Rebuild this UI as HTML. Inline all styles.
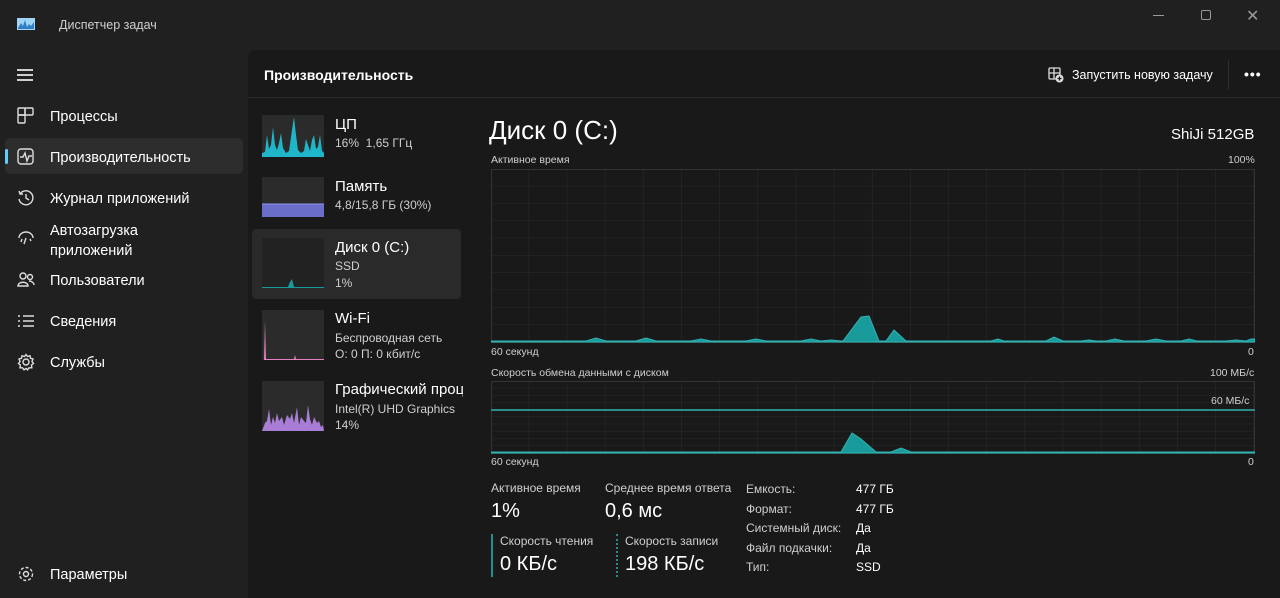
<!DOCTYPE html>
<html><head><meta charset="utf-8"><style>
*{margin:0;padding:0;box-sizing:border-box}
body{width:1280px;height:598px;background:#202020;font-family:"Liberation Sans","Noto Sans CJK SC",sans-serif;color:#fff;position:relative;overflow:hidden}
.a{position:absolute;white-space:nowrap}
.nav{font-size:14.5px;color:#fff}
.sm{font-size:12px;color:#cfcfcf}
.xs{font-size:10.5px;color:#cfcfcf}
</style></head><body>
<svg class="a" style="left:17px;top:17px" width="18" height="14"><rect x="0" y="1" width="18" height="12" fill="#9fd4f5"/><path d="M1 11 L4 6 L6 9 L8 3 L10 10 L12 7 L14 9 L17 5 L17 12 L1 12Z" fill="#2f7fc6"/></svg>
<div class="a" style="left:59px;top:18px;font-size:12.5px;color:#cfcfcf">Диспетчер задач</div>
<div class="a" style="left:1153px;top:15px;width:11px;height:1px;background:#9a9a9a"></div>
<div class="a" style="left:1201px;top:10px;width:10px;height:10px;border:1px solid #9a9a9a;border-radius:2px"></div>
<div class="a" style="left:1246px;top:6px;font-size:16px;color:#9a9a9a">✕</div>
<div class="a" style="left:17px;top:69px;width:16px;height:1.5px;background:#cfcfcf;box-shadow:0 5px 0 #cfcfcf,0 10px 0 #cfcfcf"></div>
<div class="a" style="left:5px;top:138px;width:238px;height:36px;background:#2d2d2d;border-radius:5px"></div>
<div class="a" style="left:5px;top:149px;width:3px;height:15px;background:#60cdff;border-radius:2px"></div>
<svg class="a" style="left:17px;top:107px" width="18" height="18" fill="none" stroke="#ddd" stroke-width="1.4"><rect x="1" y="1" width="7" height="7" rx="1"/><rect x="1" y="8" width="7" height="8" rx="1"/><rect x="8" y="1" width="8" height="7" rx="1"/></svg>
<div class="a nav" style="left:50px;top:109px">Процессы</div>
<svg class="a" style="left:17px;top:148px" width="18" height="18" fill="none" stroke="#ddd" stroke-width="1.4"><rect x="1" y="1" width="15" height="15" rx="3"/><path d="M3 9 L6 9 L8 5 L10 13 L12 8 L15 8"/></svg>
<div class="a nav" style="left:50px;top:150px">Производительность</div>
<svg class="a" style="left:17px;top:189px" width="18" height="18" fill="none" stroke="#ddd" stroke-width="1.4"><path d="M3 5 A7 7 0 1 1 2 10"/><path d="M2 2 L3 5 L6 5"/><path d="M9 5 L9 9 L12 11"/></svg>
<div class="a nav" style="left:50px;top:191px">Журнал приложений</div>
<svg class="a" style="left:17px;top:229px" width="18" height="18" fill="none" stroke="#ddd" stroke-width="1.4"><path d="M2 9 A7 6 0 0 1 16 9"/><path d="M9 9 L7 15"/><path d="M5 10 L4 13 M13 10 L14 12"/></svg>
<div class="a nav" style="left:50px;top:221px;line-height:20px">Автозагрузка<br>приложений</div>
<svg class="a" style="left:17px;top:271px" width="18" height="18" fill="none" stroke="#ddd" stroke-width="1.4"><circle cx="6" cy="5" r="3"/><circle cx="13" cy="6" r="2.5"/><path d="M1 15 C1 10 11 10 11 15 Z"/><path d="M12 10 C15 10 17 12 17 14"/></svg>
<div class="a nav" style="left:50px;top:273px">Пользователи</div>
<svg class="a" style="left:17px;top:312px" width="18" height="18" stroke="#ddd" stroke-width="1.4"><path d="M1 4H3M6 4H17M1 9H3M6 9H17M1 14H3M6 14H17"/></svg>
<div class="a nav" style="left:50px;top:314px">Сведения</div>
<svg class="a" style="left:17px;top:353px" width="18" height="18" fill="none" stroke="#ddd" stroke-width="1.4"><circle cx="9" cy="9" r="3"/><path d="M9 1.5 L10.5 3.5 L13 2.8 L13.5 5.3 L16 6 L15 8.5 L16.5 10.5 L14.5 12 L14.8 14.8 L12 14.8 L10.5 16.8 L9 15.5 L7 16.8 L5.5 14.8 L3 14.8 L3.3 12 L1.5 10.5 L3 8.5 L2 6 L4.5 5.3 L5 2.8 L7.5 3.5 Z"/></svg>
<div class="a nav" style="left:50px;top:355px">Службы</div>
<svg class="a" style="left:17px;top:565px" width="18" height="18" fill="none" stroke="#ddd" stroke-width="1.4"><circle cx="9" cy="9" r="2.5"/><circle cx="9" cy="9" r="6.5" stroke-dasharray="3 2"/></svg>
<div class="a nav" style="left:50px;top:567px">Параметры</div>
<div class="a" style="left:248px;top:50px;width:1032px;height:548px;background:#191919;border-top-left-radius:8px"></div>
<div class="a" style="left:248px;top:97px;width:1032px;height:1px;background:#2b2b2b"></div>
<div class="a" style="left:264px;top:67px;font-size:14px;font-weight:bold">Производительность</div>
<svg class="a" style="left:1048px;top:67px" width="16" height="16" fill="none" stroke="#ddd" stroke-width="1.3"><rect x="1" y="1" width="11" height="11" rx="1"/><path d="M1 6H12M6 1V12"/><circle cx="11.5" cy="11.5" r="4" fill="#ddd" stroke="none"/><path d="M11.5 9.5V13.5M9.5 11.5H13.5" stroke="#191919"/></svg>
<div class="a" style="left:1072px;top:68px;font-size:12.5px">Запустить новую задачу</div>
<div class="a" style="left:1228px;top:60px;width:1px;height:30px;background:#2e2e2e"></div>
<div class="a" style="left:1244px;top:66px;font-size:14px;letter-spacing:1px;font-weight:bold">•••</div>
<div class="a" style="left:252px;top:229px;width:209px;height:70px;background:#2a2a2a;border-radius:4px"></div>
<svg class="a" style="left:262px;top:115px" width="62" height="42"><rect width="62" height="42" fill="#2b2b2b"/><path d="M0 42 L0 38 L3 37 L5 20 L7 34 L9 30 L11 12 L13 30 L15 35 L17 28 L19 18 L21 33 L24 38 L27 36 L30 15 L32 2 L34 20 L36 35 L39 38 L42 36 L44 24 L46 30 L48 36 L50 25 L52 20 L54 34 L56 32 L58 20 L60 36 L62 38 L62 42Z" fill="#1fb6c9"/></svg>
<div class="a" style="left:335px;top:116px;font-size:15px">ЦП</div>
<div class="a sm" style="left:335px;top:136px">16%&nbsp; 1,65 ГГц</div>
<svg class="a" style="left:262px;top:177px" width="62" height="40"><rect width="62" height="40" fill="#2b2b2b"/><rect y="27" width="62" height="13" fill="#6b6ec9"/><path d="M0 27H62" stroke="#8f93ee"/></svg>
<div class="a" style="left:335px;top:178px;font-size:15px">Память</div>
<div class="a sm" style="left:335px;top:198px">4,8/15,8 ГБ (30%)</div>
<svg class="a" style="left:262px;top:238px" width="62" height="50"><rect width="62" height="50" fill="#222"/><path d="M0 49 L26 49 L28 44 L30 41 L32 49 L62 49 L62 50 L0 50Z" fill="#1a9b9b"/></svg>
<div class="a" style="left:335px;top:239px;font-size:15px">Диск 0 (C:)</div>
<div class="a sm" style="left:335px;top:259px">SSD</div>
<div class="a sm" style="left:335px;top:276px">1%</div>
<svg class="a" style="left:262px;top:310px" width="62" height="50"><rect width="62" height="50" fill="#2b2b2b"/><path d="M0 50 L2 50 L3 10 L4 49 L32 49 L33 45 L34 49 L62 49 L62 50Z" fill="#e67fc0"/></svg>
<div class="a" style="left:335px;top:310px;font-size:15px">Wi-Fi</div>
<div class="a sm" style="left:335px;top:331px">Беспроводная сеть</div>
<div class="a sm" style="left:335px;top:347px">О: 0 П: 0 кбит/с</div>
<svg class="a" style="left:262px;top:381px" width="62" height="50"><rect width="62" height="50" fill="#2b2b2b"/><path d="M0 50 L3 42 L5 40 L7 28 L9 44 L11 36 L13 42 L15 32 L17 40 L20 36 L22 44 L25 34 L28 38 L30 32 L32 42 L35 26 L37 44 L39 36 L42 40 L44 42 L46 24 L48 38 L50 44 L52 36 L55 42 L57 40 L59 46 L61 44 L62 50Z" fill="#a97dd6"/></svg>
<div class="a" style="left:335px;top:381px;font-size:15px;width:128px;overflow:hidden">Графический процессор</div>
<div class="a sm" style="left:335px;top:402px">Intel(R) UHD Graphics</div>
<div class="a sm" style="left:335px;top:418px">14%</div>
<div class="a" style="left:489px;top:115px;font-size:26px">Диск 0 (C:)</div>
<div class="a" style="left:1171px;top:126px;font-size:15px">ShiJi 512GB</div>
<div class="a xs" style="left:491px;top:154px">Активное время</div>
<div class="a xs" style="left:1228px;top:154px">100%</div>
<svg class="a" style="left:491px;top:169px" width="764" height="174">
<defs><pattern id="g1" width="38.15" height="17.3" patternUnits="userSpaceOnUse"><path d="M38.15 0V17.3M0 17.3H38.15" stroke="#2a2a2a" fill="none"/></pattern></defs>
<rect width="764" height="174" fill="url(#g1)"/>
<rect x="0.5" y="0.5" width="763" height="173" fill="none" stroke="#333"/>
<path d="M0 172 L95 172 L105 169 L115 172 L145 172 L155 169 L165 172 L200 172 L210 170 L220 172 L255 172 L265 170 L275 172 L310 172 L320 170 L330 172 L340 171 L350 172 L352 172 L370 148 L378 147 L388 172 L395 172 L403 161 L415 172 L500 172 L507 170 L513 172 L555 172 L563 168 L572 172 L590 172 L598 171 L605 172 L615 172 L624 170 L633 172 L655 172 L665 170 L675 172 L690 172 L698 170 L706 172 L735 172 L745 171 L755 172 L760 170 L764 170 L764 173 L0 173Z" fill="#1a9b9b" stroke="#2fb3b3" stroke-width="1"/>
</svg>
<div class="a xs" style="left:491px;top:346px">60 секунд</div>
<div class="a xs" style="left:1248px;top:346px">0</div>
<div class="a xs" style="left:491px;top:367px">Скорость обмена данными с диском</div>
<div class="a xs" style="left:1210px;top:367px">100 МБ/с</div>
<svg class="a" style="left:491px;top:381px" width="764" height="73">
<defs><pattern id="g2" width="38.15" height="7.2" patternUnits="userSpaceOnUse"><path d="M38.15 0V7.2M0 7.2H38.15" stroke="#2a2a2a" fill="none"/></pattern></defs>
<rect width="764" height="73" fill="url(#g2)"/>
<rect x="0.5" y="0.5" width="763" height="72" fill="none" stroke="#333"/>
<path d="M0 29H764" stroke="#2a8c8c" stroke-width="2"/>
<path d="M0 71 L350 71 L361 52 L370 58 L385 71 L400 71 L410 67 L420 71 L764 71 L764 72 L0 72Z" fill="#1a9b9b" stroke="#2fb3b3"/>
</svg>
<div class="a xs" style="left:1211px;top:395px">60 МБ/с</div>
<div class="a xs" style="left:491px;top:456px">60 секунд</div>
<div class="a xs" style="left:1248px;top:456px">0</div>
<div class="a sm" style="left:491px;top:481px">Активное время</div>
<div class="a" style="left:491px;top:500px;font-size:20px">1%</div>
<div class="a sm" style="left:605px;top:481px">Среднее время ответа</div>
<div class="a" style="left:605px;top:500px;font-size:20px">0,6 мс</div>
<div class="a" style="left:491px;top:534px;width:2px;height:43px;background:#2a8c8c"></div>
<div class="a sm" style="left:500px;top:534px">Скорость чтения</div>
<div class="a" style="left:500px;top:553px;font-size:20px">0 КБ/с</div>
<div class="a" style="left:616px;top:534px;width:0;height:43px;border-left:2px dotted #2a8c8c"></div>
<div class="a sm" style="left:625px;top:534px">Скорость записи</div>
<div class="a" style="left:625px;top:553px;font-size:20px">198 КБ/с</div>
<div class="a sm" style="left:746px;top:480px;line-height:19.6px">Емкость:<br>Формат:<br>Системный диск:<br>Файл подкачки:<br>Тип:</div>
<div class="a sm" style="left:856px;top:480px;line-height:19.6px;color:#fff">477 ГБ<br>477 ГБ<br>Да<br>Да<br>SSD</div>
</body></html>
